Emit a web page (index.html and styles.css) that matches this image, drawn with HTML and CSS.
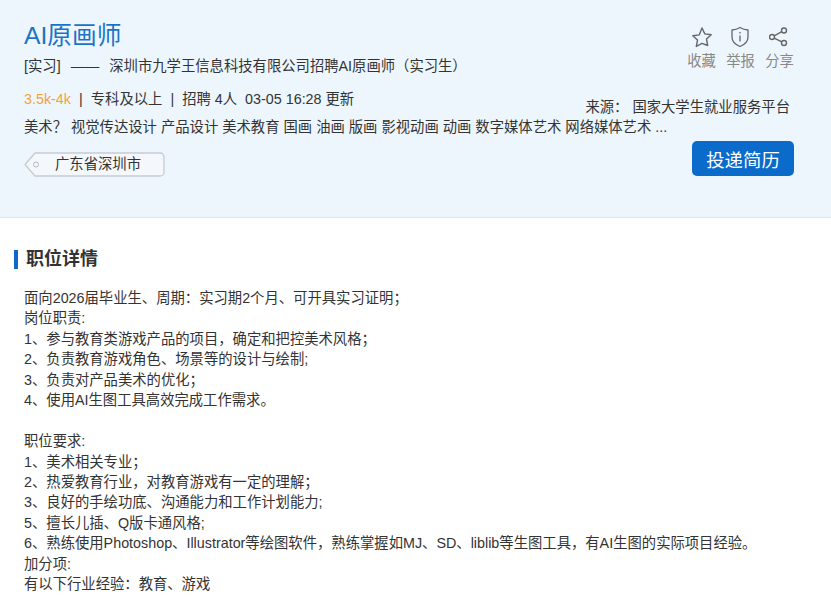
FILE: index.html
```html
<!DOCTYPE html>
<html lang="zh-CN">
<head>
    <meta charset="UTF-8">
    <title>AI原画师</title>
    <link rel="stylesheet" href="styles.css">
</head>
<body>
    <header class="job-head">
        <div class="job-info">
            <h1 class="job-title">AI原画师</h1>
            <p class="job-company">
                <span>[实习]</span>
                <span class="dash">——</span>
                <span>深圳市九学王信息科技有限公司招聘AI原画师（实习生）</span>
            </p>
            <p class="job-meta">
                <span class="salary">3.5k-4k</span>
                <span class="sep">|</span>
                <span>专科及以上</span>
                <span class="sep">|</span>
                <span>招聘 4人</span>
                <span class="updated">03-05 16:28 更新</span>
            </p>
            <p class="job-majors">美术？ 视觉传达设计 产品设计 美术教育 国画 油画 版画 影视动画 动画 数字媒体艺术 网络媒体艺术 ...</p>
            <div class="job-place">
                <svg class="place-shape" width="141" height="25" viewBox="0 0 141 25">
                    <path d="M11 1H136a4 4 0 0 1 4 4V20a4 4 0 0 1-4 4H11L1 12.500Z" fill="#f4f8fc" stroke="#c6cbd0" stroke-width="1.300"/>
                    <circle cx="12" cy="12.500" r="2.500" fill="none" stroke="#b5babf"/>
                </svg>
                <span class="place-name">广东省深圳市</span>
            </div>
        </div>
        <div class="job-side">
            <div class="job-actions">
                <a class="action">
                    <svg width="22" height="22" viewBox="0 0 22 22" fill="none" stroke="#666" stroke-width="1.400" stroke-linejoin="round">
                        <path d="M11 2l2.800 5.900 6.400.800-4.700 4.400 1.200 6.400L11 17.400l-5.700 3.100 1.200-6.400-4.700-4.400 6.400-.800z"/>
                    </svg>
                    <span>收藏</span>
                </a>
                <a class="action">
                    <svg width="22" height="22" viewBox="1 0 22 22" fill="none" stroke="#666" stroke-width="1.300" stroke-linejoin="round">
                        <path d="M11 1.500c2.400 1.500 5 2.300 8 2.500v7c0 4.500-3 7.500-8 9.500-5-2-8-5-8-9.500V4c3-.2 5.600-1 8-2.500z"/>
                        <path d="M11 9.500v6M11 6v1.500"/>
                    </svg>
                    <span>举报</span>
                </a>
                <a class="action">
                    <svg width="22" height="22" viewBox="2 0 22 22" fill="none" stroke="#666" stroke-width="1.400">
                        <circle cx="17" cy="4.500" r="2.500"/>
                        <circle cx="5" cy="11" r="2.500"/>
                        <circle cx="17" cy="17" r="2.500"/>
                        <path d="M7.200 9.800l7.600-4.100M7.200 12.200l7.600 3.700"/>
                    </svg>
                    <span>分享</span>
                </a>
            </div>
            <p class="job-source"><span>来源：</span><span>国家大学生就业服务平台</span></p>
            <button class="apply-btn" type="button">投递简历</button>
        </div>
    </header>

    <section class="job-detail">
        <h2 class="detail-title">职位详情</h2>
        <div class="detail-text">
            <p>面向2026届毕业生、周期：实习期2个月、可开具实习证明；</p>
            <p>岗位职责:</p>
            <p>1、参与教育类游戏产品的项目，确定和把控美术风格；</p>
            <p>2、负责教育游戏角色、场景等的设计与绘制;</p>
            <p>3、负责对产品美术的优化；</p>
            <p>4、使用AI生图工具高效完成工作需求。</p>
            <p class="blank">&nbsp;</p>
            <p>职位要求:</p>
            <p>1、美术相关专业；</p>
            <p>2、热爱教育行业，对教育游戏有一定的理解；</p>
            <p>3、良好的手绘功底、沟通能力和工作计划能力;</p>
            <p>5、擅长儿插、Q版卡通风格;</p>
            <p>6、熟练使用Photoshop、Illustrator等绘图软件，熟练掌握如MJ、SD、liblib等生图工具，有AI生图的实际项目经验。</p>
            <p>加分项:</p>
            <p>有以下行业经验：教育、游戏</p>
        </div>
    </section>
</body>
</html>
```

FILE: styles.css
```css
html, body {
    margin: 0;
    padding: 0;
    height: 100%;
    overflow: hidden;
}

body {
    background: #fff;
    color: #333;
    font-family: "Liberation Sans", "Noto Sans CJK SC", sans-serif;
    font-size: 14.330px;
}

p, h1, h2 {
    margin: 0;
    font-weight: normal;
}

/* Header panel */
.job-head {
    display: grid;
    grid-template-columns: 1fr 210px;
    height: 218px;
    box-sizing: border-box;
    padding: 0 36px 0 24px;
    background: #eef6fd;
    border-bottom: 1px solid #e3e5e7;
}

.job-info {
    grid-row: 1;
    grid-column: 1 / 3;
    padding-top: 20px;
}

.job-title {
    color: #1a73c8;
    font-size: 24.700px;
    line-height: 32px;
}

.job-company {
    display: flex;
    gap: 10px;
    margin-top: 3px;
    line-height: 22px;
}

.job-meta {
    display: flex;
    gap: 8px;
    margin-top: 12px;
    line-height: 20px;
}

.salary {
    color: #f5a233;
}

.job-majors {
    margin-top: 8px;
    line-height: 20px;
}

/* Location tag */
.job-place {
    display: grid;
    width: 141px;
    height: 25px;
    margin-top: 15px;
}

.place-shape, .place-name {
    grid-row: 1;
    grid-column: 1;
}

.place-name {
    padding-left: 31px;
    line-height: 25px;
}

/* Right column */
.job-side {
    grid-row: 1;
    grid-column: 2;
    display: flex;
    flex-direction: column;
    align-items: flex-end;
    padding-top: 26px;
}

.job-actions {
    display: flex;
    gap: 10px;
    margin-right: 1px;
}

.action {
    display: flex;
    flex-direction: column;
    align-items: center;
    gap: 3px;
    width: 29px;
    color: #888;
    line-height: 20px;
    white-space: nowrap;
}

.job-source {
    display: flex;
    gap: 4px;
    margin-top: 26px;
    margin-right: 5px;
    line-height: 20px;
    white-space: nowrap;
}

.apply-btn {
    width: 102px;
    height: 35px;
    margin-top: 24px;
    margin-right: 1px;
    padding: 0;
    border: none;
    border-radius: 5px;
    background: #0b6bcb;
    color: #fff;
    font: inherit;
    font-size: 18.400px;
}

/* Details */
.job-detail {
    padding: 32px 24px 0 14px;
}

.detail-title {
    padding-left: 8px;
    border-left: 4px solid #0b6bcb;
    font-size: 18px;
    font-weight: bold;
    line-height: 19px;
}

.detail-text {
    margin-top: 19px;
    padding-left: 10px;
    line-height: 20.430px;
    white-space: nowrap;
}
```
